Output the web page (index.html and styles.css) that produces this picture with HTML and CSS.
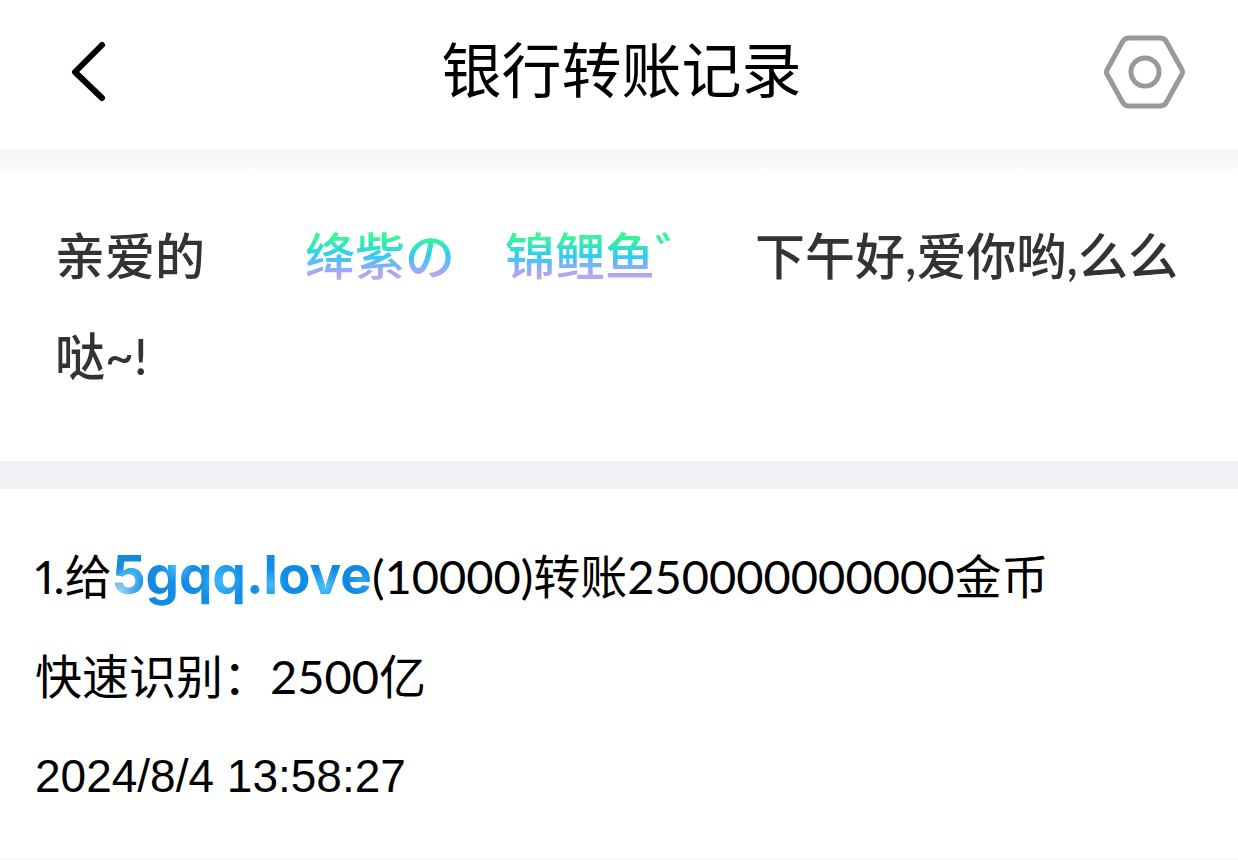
FILE: index.html
```html
<!DOCTYPE html>
<html lang="zh-CN">
<head>
    <meta charset="UTF-8">
    <meta name="viewport" content="width=device-width, initial-scale=1.0">
    <title>银行转账记录</title>
    <link rel="stylesheet" href="styles.css">
</head>
<body>

    <header class="header">
        <button class="icon-btn" type="button" aria-label="返回">
            <svg width="96" height="96" viewBox="0 0 96 96" fill="none" stroke="#000" stroke-width="6" stroke-linecap="round" stroke-linejoin="round">
                <path d="M52 21 L25 48 L52 74"/>
            </svg>
        </button>
        <h1 class="title">银行转账记录</h1>
        <button class="icon-btn" type="button" aria-label="设置">
            <svg width="96" height="96" viewBox="0 0 96 96" fill="none" stroke="#999" stroke-width="5" stroke-linejoin="round">
                <path d="M32 14 H63 Q67 14 69 17 L84 44 Q87 48 84 52 L69 79 Q67 82 63 82 H32 Q28 82 26 79 L11 52 Q8 48 11 44 L26 17 Q28 14 32 14 Z"/>
                <circle cx="48" cy="48" r="14"/>
            </svg>
        </button>
    </header>

    <main>
        <section class="greeting">
            <p>亲爱的　　<span class="nickname">绛紫の　锦鲤鱼゛</span>　下午好,爱你哟,么么哒~!</p>
        </section>

        <section class="record">
            <p><span class="index">1.</span>给<a class="site" href="#">5gqq.love</a>(10000)转账250000000000金币</p>
            <p>快速识别：2500亿</p>
            <p class="time"><time datetime="2024-08-04T13:58:27">2024/8/4 13:58:27</time></p>
        </section>
    </main>

</body>
</html>
```
FILE: styles.css
```css
* { box-sizing: border-box; }
body { margin: 0; background-color: #fff; color: #000; font-family: Lato, "Noto Sans CJK SC", sans-serif; }
p { margin: 0; }

.header { position: relative; display: flex; align-items: flex-start; justify-content: space-between; padding: 24px 45px 29px 50px; background-color: #fff; }
.header::after { content: ""; position: absolute; left: 0; right: 0; top: 100%; height: 28px; background: linear-gradient(#f2f4f6, #fff); }
.icon-btn { display: block; padding: 0; border: none; background: none; cursor: pointer; }
.icon-btn svg { display: block; }
.title { margin: 0; font-size: 60px; font-weight: 400; line-height: 92px; }

.greeting { padding: 57px 48px 55px 55px; border-bottom: 28px solid #eff1f5; color: #333; font-size: 50px; font-weight: 500; line-height: 100px; }
.nickname { background: linear-gradient(#38f59a 20%, #30cbf5 50%, #8aaefa 70%, #c9a2ee 88%); -webkit-background-clip: text; background-clip: text; color: transparent; }

.record { padding: 37px 35px 33px; border-bottom: 1px solid #f2f2f2; font-size: 47px; line-height: 100px; }
.index { font-variant-numeric: proportional-nums; }
.time { font-family: "Liberation Sans", Arial, sans-serif; font-size: 46px; }
.site {
    font-family: Inter, sans-serif; font-size: 53px; font-weight: 700; line-height: 1; text-decoration: none; color: transparent;
    background:
        radial-gradient(circle at 3% 75%, #9fd4f8, transparent 24px),
        radial-gradient(circle at 8% 50%, #45b8f8, transparent 16px),
        radial-gradient(circle at 25% 35%, #4cc0fa, transparent 18px),
        radial-gradient(circle at 42% 60%, #45baf8, transparent 22px),
        radial-gradient(circle at 61% 65%, #45baf8, transparent 16px),
        radial-gradient(circle at 82% 68%, #50c4fa, transparent 20px),
        radial-gradient(circle at 96% 60%, #35aaf2, transparent 14px),
        linear-gradient(90deg, #1488dc, #1290ea 50%, #0f86e0);
    -webkit-background-clip: text; background-clip: text;
}
```
